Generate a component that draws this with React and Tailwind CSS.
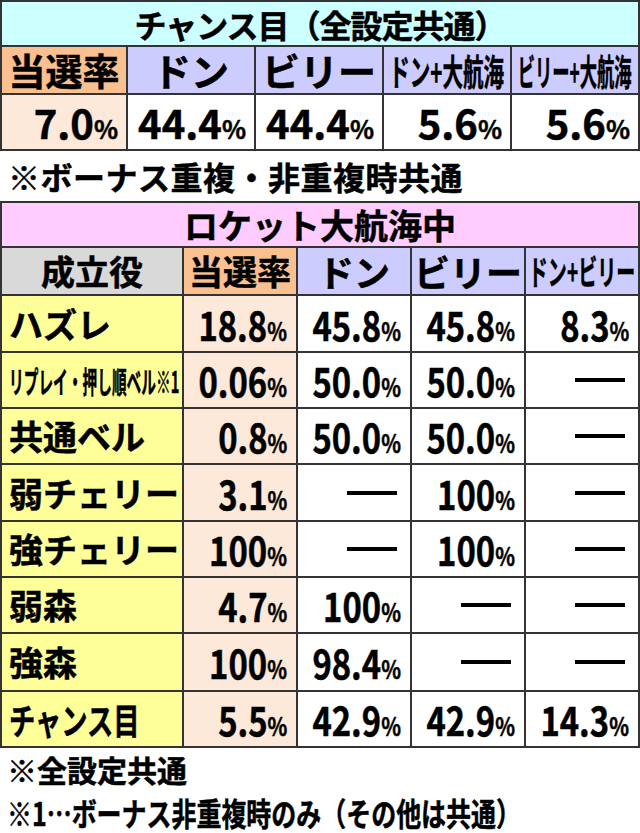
const line = "border-[#333]";

const Pct = ({ v, narrow }) => (
  <span
    className={
      narrow
        ? "inline-flex items-baseline leading-none scale-x-[0.82] origin-right"
        : "inline-flex items-baseline leading-none"
    }
  >
    <span className="text-[40px]">{v}</span>
    <span className="text-[25px]">%</span>
  </span>
);

// 該当なしのバー
const Dash = () => <div className="w-[50px] h-[4px] bg-black" aria-label="なし" />;

const Squeeze = ({ children, scale }) => (
  <span className={`inline-block whitespace-nowrap ${scale}`}>{children}</span>
);

const t1Head = [
  { label: "当選率", bg: "bg-[#fac08f]", size: "text-[37px]" },
  { label: "ドン", bg: "bg-[#ccccff]", size: "text-[38px]" },
  { label: "ビリー", bg: "bg-[#ccccff]", size: "text-[38px]" },
  { label: "ドン+大航海", bg: "bg-[#ccccff]", size: "text-[36px]", sq: "scale-x-[0.57]" },
  { label: "ビリー+大航海", bg: "bg-[#ccccff]", size: "text-[36px]", sq: "scale-x-[0.48]" },
];
const t1Vals = ["7.0", "44.4", "44.4", "5.6", "5.6"];

const t2Head = [
  { label: "成立役", bg: "bg-[#d9d9d9]", size: "text-[34px]" },
  { label: "当選率", bg: "bg-[#fac08f]", size: "text-[34px]" },
  { label: "ドン", bg: "bg-[#ccccff]", size: "text-[36px]" },
  { label: "ビリー", bg: "bg-[#ccccff]", size: "text-[36px]" },
  { label: "ドン+ビリー", bg: "bg-[#ccccff]", size: "text-[34px]", sq: "scale-x-[0.56]" },
];

const rows = [
  { name: "ハズレ", h: "h-[57px]", rate: "18.8", don: "45.8", billy: "45.8", both: "8.3" },
  { name: "リプレイ・押し順ベル※1", h: "h-[56px]", sq: "text-[30px]", sc: "scale-x-[0.49]", rate: "0.06", don: "50.0", billy: "50.0", both: null },
  { name: "共通ベル", h: "h-[56px]", rate: "0.8", don: "50.0", billy: "50.0", both: null },
  { name: "弱チェリー", h: "h-[57px]", rate: "3.1", don: null, billy: "100", both: null },
  { name: "強チェリー", h: "h-[56px]", rate: "100", don: null, billy: "100", both: null },
  { name: "弱森", h: "h-[56px]", rate: "4.7", don: "100", billy: null, both: null },
  { name: "強森", h: "h-[58px]", rate: "100", don: "98.4", billy: null, both: null },
  { name: "チャンス目", h: "h-[56px]", sq: "text-[36px]", sc: "scale-x-[0.73]", rate: "5.5", don: "42.9", billy: "42.9", both: "14.3" },
];

const cell = `border-r-2 border-b-2 ${line} flex items-center`;

export default function App() {
  return (
    <div className="w-[640px] h-[833px] bg-white text-black font-bold font-['Noto_Sans_CJK_JP','Noto_Sans',sans-serif] [-webkit-text-stroke:0.5px_#000] overflow-hidden">
      {/* チャンス目 */}
      <div className={`grid grid-cols-[126px_128px_128px_128px_128px] border-t-2 border-l-2 ${line}`}>
        <div className={`${cell} col-span-5 h-[45px] justify-center bg-[#ccffff] text-[32px] leading-none tracking-[-1px]`}>
          チャンス目（全設定共通）
        </div>
        {t1Head.map((c) => (
          <div key={c.label} className={`${cell} h-[48px] justify-center ${c.bg} ${c.size} leading-none`}>
            {c.sq ? <Squeeze scale={c.sq}>{c.label}</Squeeze> : c.label}
          </div>
        ))}
        {t1Vals.map((v, i) => (
          <div
            key={i}
            className={`${cell} h-[56px] justify-end pr-[8px] ${i === 0 ? "bg-[#fde9d9]" : "bg-white"}`}
          >
            <Pct v={v} />
          </div>
        ))}
      </div>

      <div className="h-[50px] flex items-center pl-[8px] text-[32px] leading-none tracking-[0.5px]">
        ※ボーナス重複・非重複時共通
      </div>

      {/* ロケット大航海中 */}
      <div className={`grid grid-cols-[182px_114px_114px_114px_114px] border-t-2 border-l-2 ${line}`}>
        <div className={`${cell} col-span-5 h-[45px] justify-center bg-[#ffccff] text-[34px] leading-none`}>
          ロケット大航海中
        </div>
        {t2Head.map((c) => (
          <div key={c.label} className={`${cell} h-[48px] justify-center ${c.bg} ${c.size} leading-none`}>
            {c.sq ? <Squeeze scale={c.sq}>{c.label}</Squeeze> : c.label}
          </div>
        ))}
        {rows.map((r) => (
          <div key={r.name} className="contents">
            <div className={`${cell} ${r.h} bg-[#ffff99] pl-[7px] leading-none ${r.sq ? r.sq : "text-[34px]"}`}>
              {r.sc ? <Squeeze scale={`${r.sc} origin-left`}>{r.name}</Squeeze> : r.name}
            </div>
            <div className={`${cell} ${r.h} justify-end pr-[9px] bg-[#fde9d9]`}>
              <Pct v={r.rate} narrow />
            </div>
            {[r.don, r.billy, r.both].map((v, i) => (
              <div key={i} className={`${cell} ${r.h} justify-end bg-white ${v ? "pr-[9px]" : "pr-[13px]"}`}>
                {v ? <Pct v={v} narrow /> : <Dash />}
              </div>
            ))}
          </div>
        ))}
      </div>

      <div className="h-[42px] flex items-center pl-[7px] text-[30px] leading-none">※全設定共通</div>
      <div className="h-[43px] flex items-center pl-[7px] text-[32px] leading-none">
        <Squeeze scale="scale-x-[0.78] origin-left">※1…ボーナス非重複時のみ（その他は共通）</Squeeze>
      </div>
    </div>
  );
}
